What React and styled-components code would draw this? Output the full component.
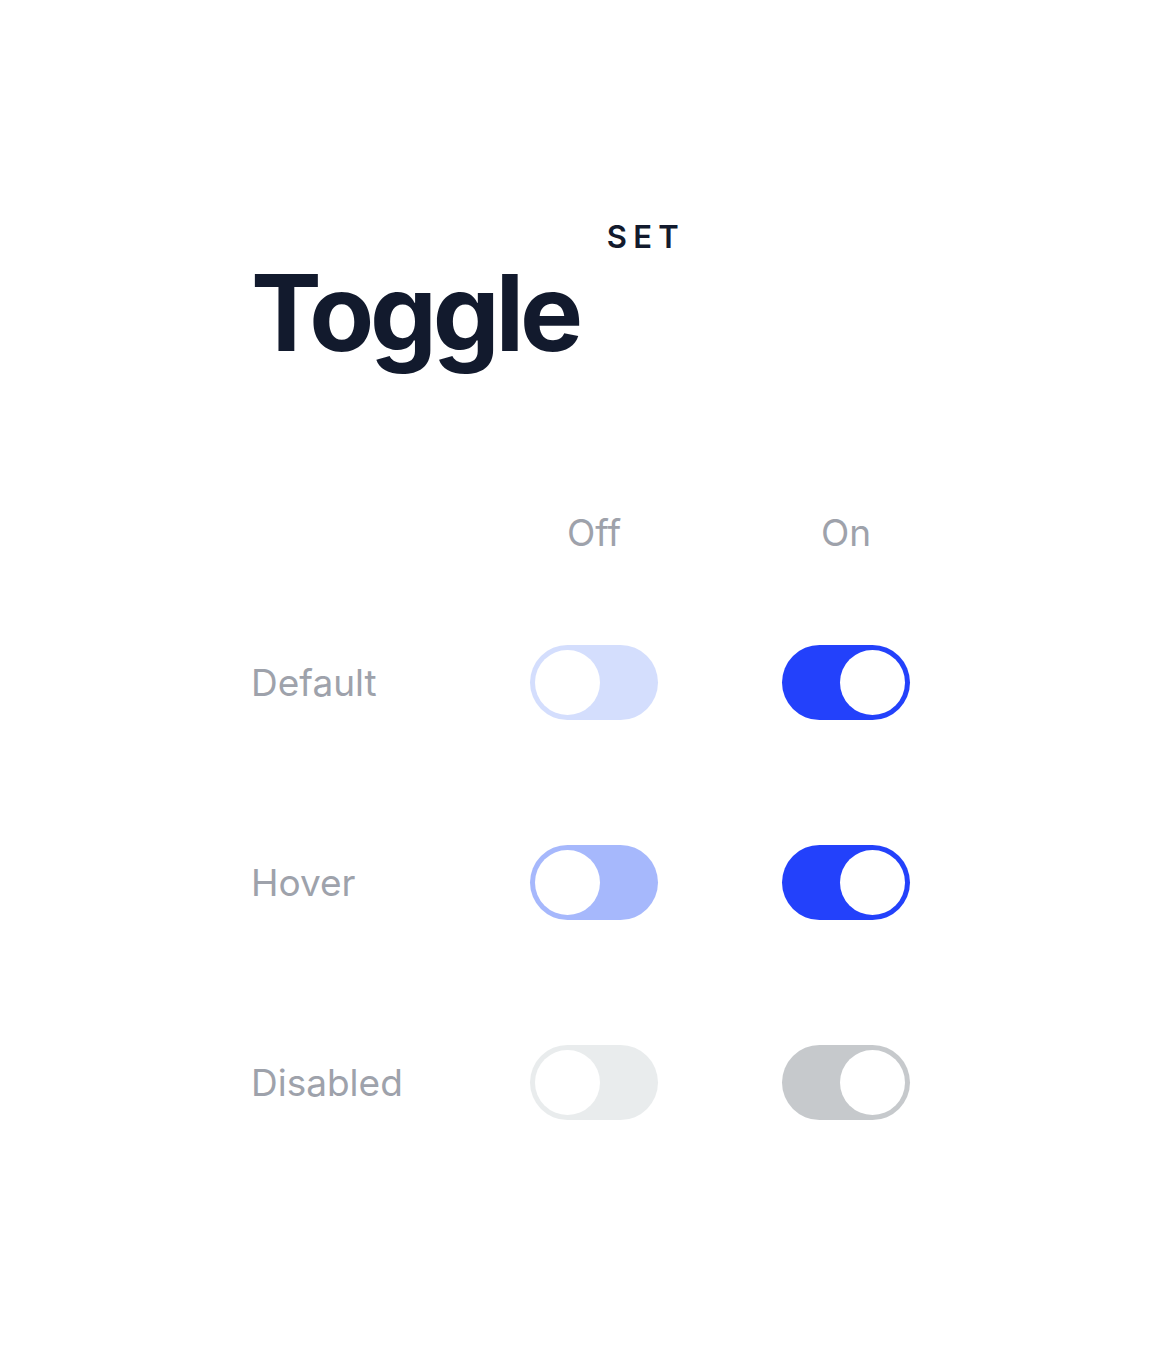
import React from "react";
import styled, { createGlobalStyle } from "styled-components";

const GlobalStyle = createGlobalStyle`
  html, body {
    margin: 0;
    padding: 0;
    background: #ffffff;
  }
  body {
    font-family: Inter, "Noto Sans", "Liberation Sans", sans-serif;
    -webkit-font-smoothing: antialiased;
  }
`;

const Page = styled.div`
  width: 1160px;
  min-height: 1372px;
  box-sizing: border-box;
  padding: 260px 0 0 251px;
`;

const TitleRow = styled.div`
  display: flex;
  align-items: flex-start;
`;

const Title = styled.h1`
  margin: 0;
  font-size: 106px;
  line-height: 1;
  font-weight: 700;
  letter-spacing: -0.04em;
  color: #121a2d;
`;

const SetLabel = styled.span`
  margin: -39px 0 0 28px;
  font-size: 31px;
  line-height: 1;
  font-weight: 600;
  letter-spacing: 0.2em;
  color: #121a2d;
`;

const Table = styled.div`
  display: flex;
  flex-direction: column;
  gap: 125px;
  margin-top: 145px;
`;

const Row = styled.div`
  display: grid;
  grid-template-columns: 155px 128px 128px;
  column-gap: 124px;
  align-items: center;
  height: ${({ $header }) => ($header ? "44px" : "75px")};
  margin-bottom: ${({ $header }) => ($header ? "-35px" : "0")};
`;

const Cell = styled.div`
  font-size: 37px;
  line-height: 44px;
  font-weight: 400;
  color: #9ea2ab;
  white-space: nowrap;
  text-align: ${({ $center }) => ($center ? "center" : "left")};
`;

const palette = {
  default: { off: "#d4defd", on: "#2341fb" },
  hover: { off: "#a6b8fc", on: "#2341fb" },
  disabled: { off: "#e9eced", on: "#c6c9cc" },
};

const Track = styled.div`
  width: 128px;
  height: 75px;
  box-sizing: border-box;
  padding: 5px;
  border-radius: 38px;
  background: ${({ $color }) => $color};
  display: flex;
  justify-content: ${({ $on }) => ($on ? "flex-end" : "flex-start")};
  align-items: center;
`;

const Knob = styled.div`
  width: 65px;
  height: 65px;
  border-radius: 50%;
  background: #ffffff;
`;

const Toggle = ({ state, on }) => (
  <Track $on={on} $color={palette[state][on ? "on" : "off"]}>
    <Knob />
  </Track>
);

const rows = [
  { label: "Default", state: "default" },
  { label: "Hover", state: "hover" },
  { label: "Disabled", state: "disabled" },
];

export default function App() {
  return (
    <>
      <GlobalStyle />
      <Page>
        <TitleRow>
          <Title>Toggle</Title>
          <SetLabel>SET</SetLabel>
        </TitleRow>
        <Table>
          <Row $header>
            <Cell />
            <Cell $center>Off</Cell>
            <Cell $center>On</Cell>
          </Row>
          {rows.map((r) => (
            <Row key={r.state}>
              <Cell>{r.label}</Cell>
              <Toggle state={r.state} />
              <Toggle state={r.state} on />
            </Row>
          ))}
        </Table>
      </Page>
    </>
  );
}
